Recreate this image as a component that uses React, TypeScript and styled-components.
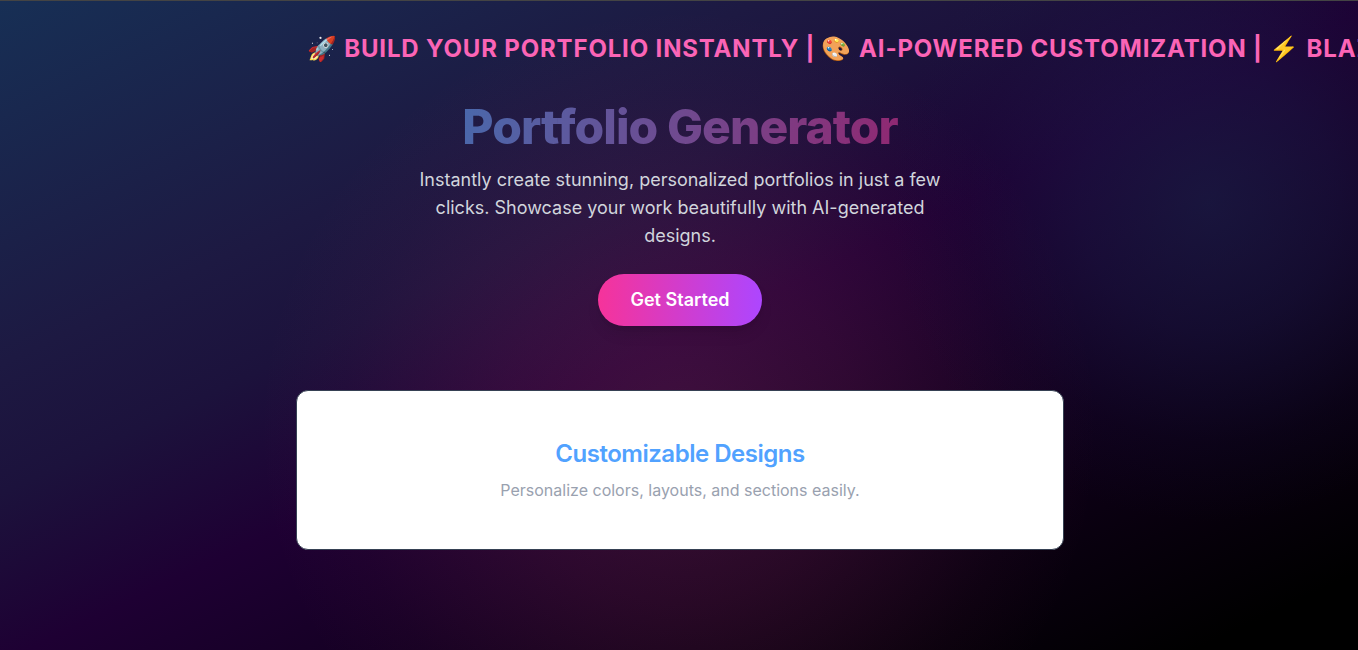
import React from "react";
import styled, { createGlobalStyle } from "styled-components";

const GlobalStyle = createGlobalStyle`
  *, *::before, *::after { box-sizing: border-box; }
  html, body { margin: 0; padding: 0; background: #000; }
  body {
    font-family: Inter, "Noto Color Emoji", "Liberation Sans", sans-serif;
  }
  h1, h2, p { margin: 0; }
`;

const Page = styled.div`
  min-height: 100vh;
  overflow: hidden;
  border-top: 1px solid #444444;
  background:
    radial-gradient(circle 320px at 89% 31%, rgba(26, 38, 78, 0.55), rgba(26, 34, 80, 0.36) 40%, rgba(20, 24, 70, 0.12) 75%, transparent),
    radial-gradient(circle 420px at 50% 66%, rgba(220, 84, 130, 0.19), rgba(220, 72, 125, 0.12) 42%, rgba(220, 70, 120, 0.03) 80%, transparent),
    linear-gradient(to bottom right, #172f55, #1d1942 28%, #1c123c 38%, #1e0033 51%, #000000 94%);
`;

const Marquee = styled.div`
  padding: 32px 0 0 307px;
  overflow: hidden;
  white-space: nowrap;
`;

const MarqueeText = styled.p`
  font-size: 24px;
  line-height: 32px;
  font-weight: 700;
  letter-spacing: 0.035em;
  text-transform: uppercase;
  color: #fb64b6;
`;

const Hero = styled.main`
  display: flex;
  flex-direction: column;
  align-items: center;
  padding: 38px 14px 64px 16px;
  text-align: center;
`;

const Title = styled.h1`
  font-size: 48px;
  line-height: 48px;
  font-weight: 800;
  letter-spacing: -0.02em;
  color: transparent;
  background: linear-gradient(to right, #6ca4fc, #e6409f);
  background-clip: text;
  -webkit-background-clip: text;
  opacity: 0.56;
`;

const Lead = styled.p`
  max-width: 544px;
  margin-top: 15px;
  font-size: 18px;
  line-height: 28px;
  color: #d1d5dc;
`;

const PrimaryButton = styled.button`
  margin-top: 24px;
  padding: 12px 32px;
  border: 0;
  border-radius: 26px;
  background: linear-gradient(to right, #f6339a, #ad46ff);
  box-shadow: 0 10px 15px -3px rgba(0, 0, 0, 0.1), 0 4px 6px -4px rgba(0, 0, 0, 0.1);
  font: 600 18px/28px Inter, "Liberation Sans", sans-serif;
  color: #ffffff;
  cursor: pointer;
`;

const Card = styled.section`
  width: 100%;
  max-width: 768px;
  margin-top: 64px;
  padding: 47px 24px;
  border: 1px solid #364153;
  border-radius: 12px;
  background: #ffffff;
`;

const CardTitle = styled.h2`
  font-size: 24px;
  line-height: 32px;
  font-weight: 600;
  letter-spacing: -0.02em;
  color: #51a2ff;
`;

const CardText = styled.p`
  margin-top: 8px;
  font-size: 16px;
  line-height: 24px;
  color: #99a1af;
`;

export default function App() {
  return (
    <>
      <GlobalStyle />
      <Page>
        <Marquee>
          <MarqueeText>
            🚀 Build your portfolio instantly | 🎨 AI-powered customization | ⚡ Blazing fast
          </MarqueeText>
        </Marquee>
        <Hero>
          <Title>Portfolio Generator</Title>
          <Lead>
            Instantly create stunning, personalized portfolios in just a few clicks. Showcase your
            work beautifully with AI-generated designs.
          </Lead>
          <PrimaryButton type="button">Get Started</PrimaryButton>
          <Card>
            <CardTitle>Customizable Designs</CardTitle>
            <CardText>Personalize colors, layouts, and sections easily.</CardText>
          </Card>
        </Hero>
      </Page>
    </>
  );
}
